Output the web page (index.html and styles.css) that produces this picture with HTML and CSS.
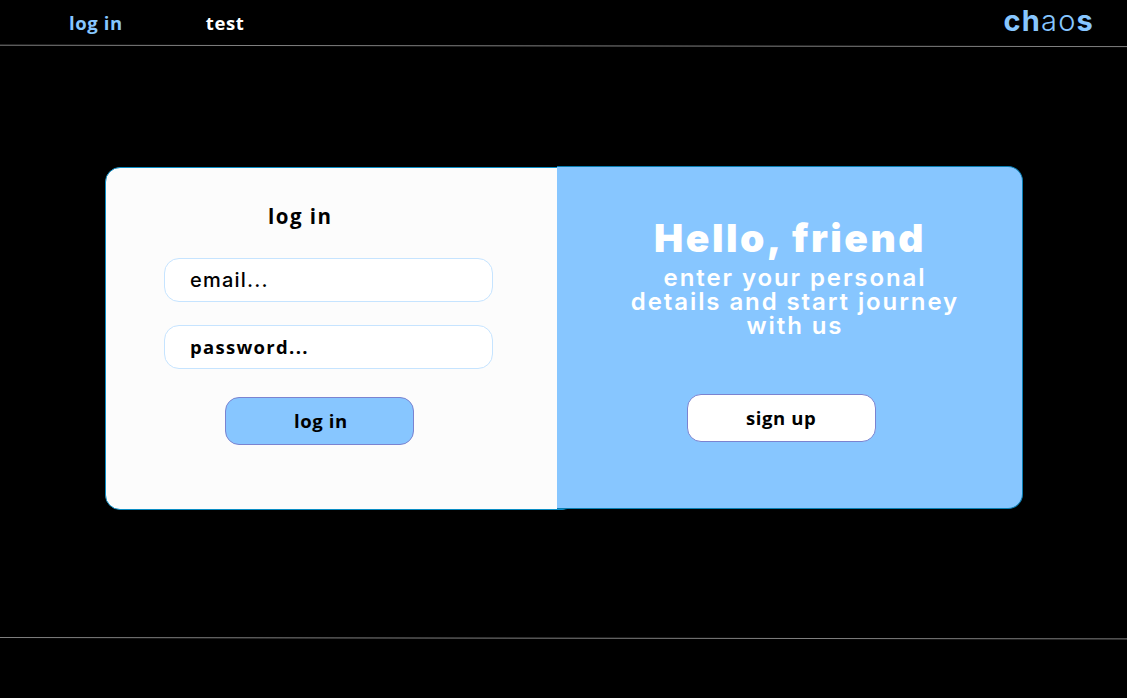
FILE: index.html
```html
<!DOCTYPE html>
<html lang="en">
<head>
<meta charset="utf-8">
<title>chaos</title>
<link rel="stylesheet" href="styles.css">
</head>
<body>
<header class="header">
  <nav class="nav"><a class="link active">log in</a><a class="link">test</a></nav>
  <div class="logo"><b>ch</b>ao<b>s</b></div>
</header>
<svg class="rule" width="1127" height="4" viewBox="0 0 1127 4"><path d="M0 1.2L1127 2.6" stroke="#808080"/></svg>
<main class="card">
  <section class="login">
    <h2 class="title">log in</h2>
    <div class="field email">email...</div>
    <div class="field password">password...</div>
    <div class="button submit"><span>log in</span></div>
  </section>
  <section class="welcome">
    <h1 class="hello">Hello, friend</h1>
    <p class="copy">enter your personal<br>details and start journey<br>with us</p>
    <div class="button signup"><span>sign up</span></div>
  </section>
</main>
<svg class="rule" width="1127" height="4" viewBox="0 0 1127 4"><path d="M0 1.5L1127 2.9" stroke="#808080"/></svg>
</body>
</html>
```
FILE: styles.css
```css
* { box-sizing: border-box; }
body { margin: 0; height: 698px; overflow: hidden; background: #000; color: #000; font-family: "Open Sans", sans-serif; }
.header { display: flex; justify-content: space-between; height: 44px; padding: 0 33px 0 69px; }
.nav { display: flex; gap: 83px; }
.link { font-size: 18.5px; font-weight: 700; line-height: 46px; letter-spacing: .6px; color: #fff; white-space: nowrap; }
.link.active { color: #87c6ff; }
.logo { font: 300 29px/41px Inter, sans-serif; letter-spacing: 1.2px; color: #87c6ff; }
.logo b { font-weight: 700; }
.rule { display: block; }
.card { display: flex; height: 343px; margin: 118px 0 127px 105px; }
.login { width: 472px; height: 343px; margin-top: 1px; padding-top: 33px; background: #fcfcfc; border: 1px solid #0b8dc4; border-radius: 15px; }
.title { width: 90px; margin: 0 0 27px 162px; font-size: 20.5px; font-weight: 700; line-height: 30px; letter-spacing: 1.5px; white-space: nowrap; }
.field { width: 329px; height: 44px; margin-left: 58px; padding-left: 25px; border: 1px solid #c6e4ff; border-radius: 15px; background: #fff; font-size: 20px; line-height: 43px; letter-spacing: 1.2px; }
.email { font-family: Inter, sans-serif; font-weight: 500; }
.password { margin-top: 23px; font-size: 18.5px; font-weight: 700; line-height: 42px; letter-spacing: 1.3px; }
.button { width: 189px; height: 48px; border: 1px solid #7b83d0; border-radius: 14px; font-size: 18.5px; font-weight: 700; line-height: 46px; letter-spacing: .6px; white-space: nowrap; }
.submit { margin: 28px 0 0 119px; padding-left: 68px; background: #87c6ff; }
.welcome { position: relative; width: 466px; height: 343px; margin-left: -20px; padding-top: 46px; background: #87c6ff; border: 1px solid #087db1; border-left: 0; border-radius: 0 15px 15px 0; color: #fff; font-family: Inter, sans-serif; }
.hello { margin: 0 0 3px 97px; font-size: 39px; font-weight: 900; line-height: 50px; letter-spacing: 2.5px; white-space: nowrap; }
.copy { width: 334px; margin: 0 0 56px 71px; font-size: 24px; font-weight: 600; line-height: 24px; letter-spacing: 1.9px; text-align: center; white-space: nowrap; }
.signup { margin-left: 130px; padding-left: 58px; background: #fff; color: #000; font-family: "Open Sans", sans-serif; }
```
